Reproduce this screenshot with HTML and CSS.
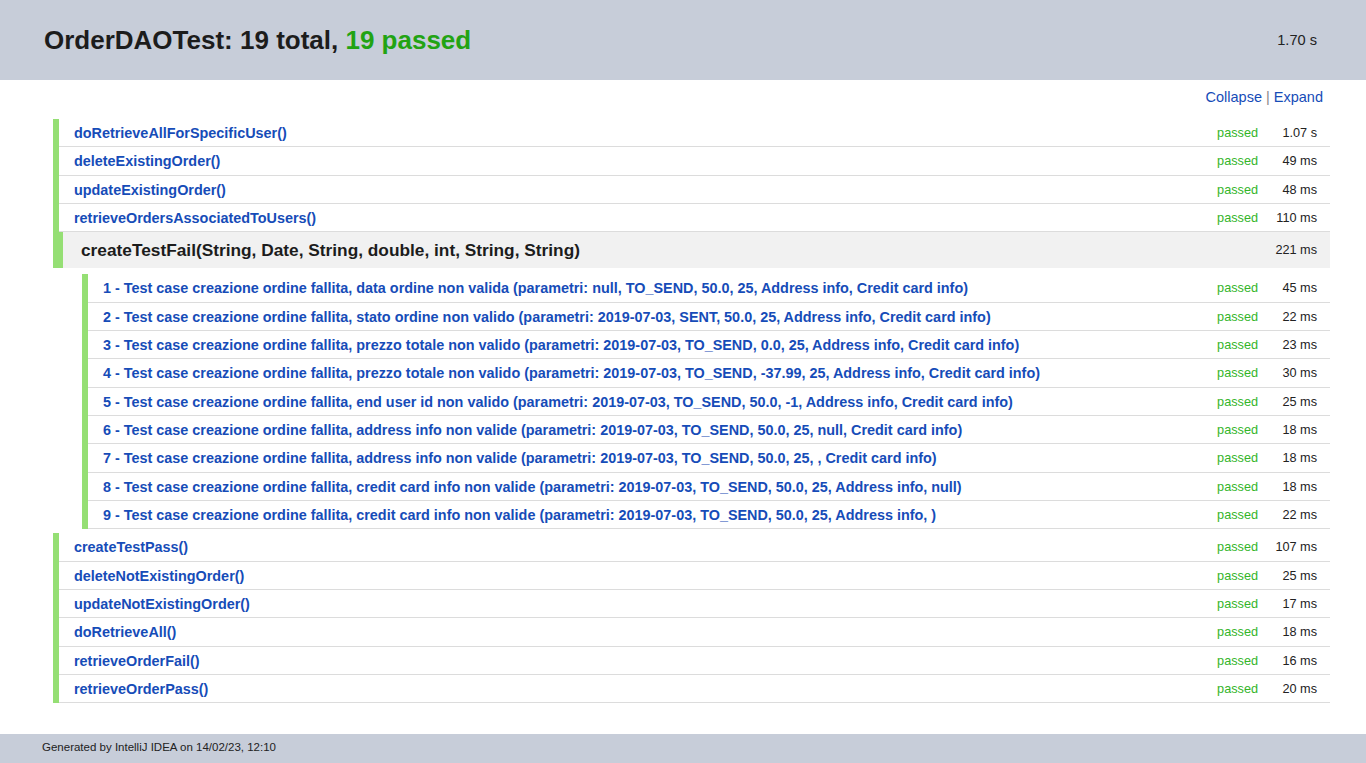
FILE: index.html
```html
<!DOCTYPE html>
<html>
<head>
<meta charset="utf-8">
<title>OrderDAOTest</title>
<link rel="stylesheet" href="styles.css">
</head>
<body>
<header class="header">
  <h1 class="title">OrderDAOTest: 19 total, <span class="ok">19 passed</span></h1>
  <span class="total-time">1.70 s</span>
</header>
<main class="content">
  <div class="toolbar"><a href="#">Collapse</a> <span class="sep">|</span> <a href="#">Expand</a></div>

  <div class="list">
    <div class="row"><a class="name" href="#">doRetrieveAllForSpecificUser()</a><span class="status">passed</span><span class="time">1.07 s</span></div>
    <div class="row"><a class="name" href="#">deleteExistingOrder()</a><span class="status">passed</span><span class="time">49 ms</span></div>
    <div class="row"><a class="name" href="#">updateExistingOrder()</a><span class="status">passed</span><span class="time">48 ms</span></div>
    <div class="row"><a class="name" href="#">retrieveOrdersAssociatedToUsers()</a><span class="status">passed</span><span class="time">110 ms</span></div>
  </div>

  <div class="group">
    <div class="group-head"><span class="group-name">createTestFail(String, Date, String, double, int, String, String)</span><span class="time">221 ms</span></div>
    <div class="list nested">
      <div class="row"><a class="name" href="#">1 - Test case creazione ordine fallita, data ordine non valida (parametri: null, TO_SEND, 50.0, 25, Address info, Credit card info)</a><span class="status">passed</span><span class="time">45 ms</span></div>
      <div class="row"><a class="name" href="#">2 - Test case creazione ordine fallita, stato ordine non valido (parametri: 2019-07-03, SENT, 50.0, 25, Address info, Credit card info)</a><span class="status">passed</span><span class="time">22 ms</span></div>
      <div class="row"><a class="name" href="#">3 - Test case creazione ordine fallita, prezzo totale non valido (parametri: 2019-07-03, TO_SEND, 0.0, 25, Address info, Credit card info)</a><span class="status">passed</span><span class="time">23 ms</span></div>
      <div class="row"><a class="name" href="#">4 - Test case creazione ordine fallita, prezzo totale non valido (parametri: 2019-07-03, TO_SEND, -37.99, 25, Address info, Credit card info)</a><span class="status">passed</span><span class="time">30 ms</span></div>
      <div class="row"><a class="name" href="#">5 - Test case creazione ordine fallita, end user id non valido (parametri: 2019-07-03, TO_SEND, 50.0, -1, Address info, Credit card info)</a><span class="status">passed</span><span class="time">25 ms</span></div>
      <div class="row"><a class="name" href="#">6 - Test case creazione ordine fallita, address info non valide (parametri: 2019-07-03, TO_SEND, 50.0, 25, null, Credit card info)</a><span class="status">passed</span><span class="time">18 ms</span></div>
      <div class="row"><a class="name" href="#">7 - Test case creazione ordine fallita, address info non valide (parametri: 2019-07-03, TO_SEND, 50.0, 25, , Credit card info)</a><span class="status">passed</span><span class="time">18 ms</span></div>
      <div class="row"><a class="name" href="#">8 - Test case creazione ordine fallita, credit card info non valide (parametri: 2019-07-03, TO_SEND, 50.0, 25, Address info, null)</a><span class="status">passed</span><span class="time">18 ms</span></div>
      <div class="row"><a class="name" href="#">9 - Test case creazione ordine fallita, credit card info non valide (parametri: 2019-07-03, TO_SEND, 50.0, 25, Address info, )</a><span class="status">passed</span><span class="time">22 ms</span></div>
    </div>
  </div>

  <div class="list after">
    <div class="row"><a class="name" href="#">createTestPass()</a><span class="status">passed</span><span class="time">107 ms</span></div>
    <div class="row"><a class="name" href="#">deleteNotExistingOrder()</a><span class="status">passed</span><span class="time">25 ms</span></div>
    <div class="row"><a class="name" href="#">updateNotExistingOrder()</a><span class="status">passed</span><span class="time">17 ms</span></div>
    <div class="row"><a class="name" href="#">doRetrieveAll()</a><span class="status">passed</span><span class="time">18 ms</span></div>
    <div class="row"><a class="name" href="#">retrieveOrderFail()</a><span class="status">passed</span><span class="time">16 ms</span></div>
    <div class="row"><a class="name" href="#">retrieveOrderPass()</a><span class="status">passed</span><span class="time">20 ms</span></div>
  </div>
</main>
<footer class="footer">Generated by IntelliJ IDEA on 14/02/23, 12:10</footer>
</body>
</html>
```
FILE: styles.css
```css
* { box-sizing: border-box; }
html, body { margin: 0; padding: 0; }
body {
  font-family: "Liberation Sans", Arial, sans-serif;
  color: #222;
  background: #fff;
}
a { text-decoration: none; color: #164cb8; }

.header {
  height: 80px;
  background: #c7cdd9;
  display: flex;
  align-items: center;
  justify-content: space-between;
  padding: 0 49px 0 44px;
}
.title {
  margin: 0;
  font-size: 26px;
  font-weight: bold;
  color: #1c1c1c;
}
.title .ok { color: #22a313; }
.total-time { font-size: 14.6px; color: #222; }

.content {
  margin: 0 36px 0 53px;
  padding-bottom: 31px;
}
.toolbar {
  text-align: right;
  font-size: 14.5px;
  padding: 9px 7px 0 0;
  height: 39px;
}
.toolbar .sep { color: #888; }

.list { border-left: 6px solid #95df74; }
.row {
  display: flex;
  align-items: center;
  height: 28.33px;
  border-bottom: 1px solid #dcdcdc;
  padding: 1px 13px 0 15px;
}
.row .name {
  flex: 1;
  font-size: 14.4px;
  font-weight: bold;
  color: #164cb8;
  white-space: nowrap;
}
.status {
  font-size: 12.7px;
  color: #34b52a;
}
.time {
  font-size: 12.7px;
  color: #222;
  min-width: 50px;
  text-align: right;
  margin-left: 9px;
}

.group-head {
  display: flex;
  align-items: center;
  height: 36px;
  background: #f1f1f1;
  border-left: 10px solid #95df74;
  padding: 0 13px 0 18px;
}
.group-name {
  flex: 1;
  font-size: 17.3px;
  font-weight: bold;
  color: #1c1c1c;
}
.nested { margin: 6px 0 0 29px; }
.after { margin-top: 4px; }

.footer {
  height: 29px;
  background: #c7cdd9;
  font-size: 11.5px;
  color: #222;
  padding: 7px 0 0 42px;
}
```
